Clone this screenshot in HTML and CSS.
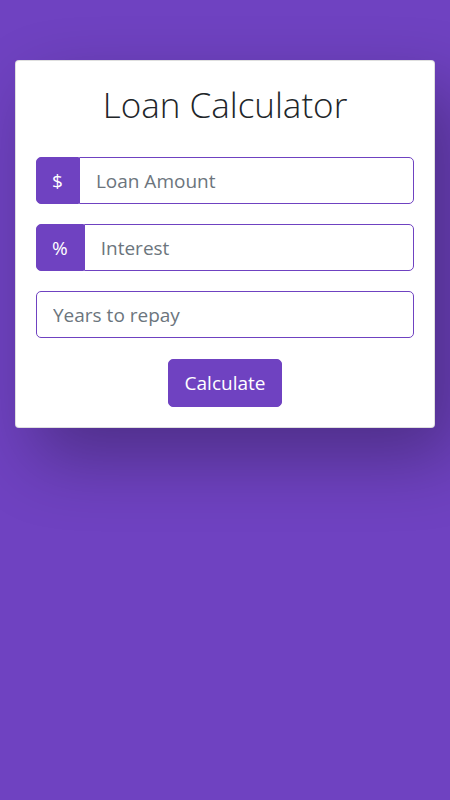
FILE: index.html
```html
<!DOCTYPE html>
<html lang="en">
<head>
<meta charset="utf-8">
<title>Loan Calculator</title>
<link rel="stylesheet" href="styles.css">
</head>
<body>
<div class="container">
  <div class="card">
    <h1 class="title">Loan Calculator</h1>
    <form class="form">
      <div class="group">
        <span class="addon">$</span>
        <input class="field field-joined" type="text" placeholder="Loan Amount">
      </div>
      <div class="group">
        <span class="addon">%</span>
        <input class="field field-joined" type="text" placeholder="Interest">
      </div>
      <div class="group">
        <input class="field" type="text" placeholder="Years to repay">
      </div>
      <div class="actions">
        <button type="button" class="btn">Calculate</button>
      </div>
    </form>
  </div>
</div>
</body>
</html>
```
FILE: styles.css
```css
* { box-sizing: border-box; }
html, body { margin: 0; padding: 0; }
body {
  background: #6f42c1;
  font-family: "Open Sans", "Noto Sans", sans-serif;
  color: #212529;
  min-height: 800px;
}
.container {
  padding: 60px 15px 0;
}
.card {
  background: #fff;
  border: 1px solid rgba(0,0,0,.125);
  border-radius: 4px;
  padding: 20px;
  box-shadow: 20px 30px 70px rgba(0,0,0,.3);
}
.title {
  margin: 0 0 28px;
  font-size: 35px;
  font-weight: 300;
  line-height: 48px;
  text-align: center;
  color: #212529;
}
.form { display: flex; flex-direction: column; gap: 20px; }
.group {
  display: flex;
  height: 47px;
}
.addon {
  display: flex;
  align-items: center;
  padding: 0 15px;
  background: #6f42c1;
  color: #fff;
  font-size: 19px;
  border: 1px solid #6f42c1;
  border-radius: 5px 0 0 5px;
}
.field {
  flex: 1;
  min-width: 0;
  height: 47px;
  padding: 0 16px;
  font-family: inherit;
  font-size: 19px;
  color: #495057;
  border: 1px solid #6f42c1;
  border-radius: 5px;
  background: #fff;
  outline: none;
}
.field::placeholder { color: #6c757d; }
.field-joined { border-radius: 0 5px 5px 0; }
.actions { display: flex; justify-content: center; margin-top: 1px; }
.btn {
  height: 48px;
  padding: 0 16px;
  font-family: inherit;
  font-size: 19px;
  color: #fff;
  background: #6f42c1;
  border: 1px solid #6f42c1;
  border-radius: 5px;
}
```
